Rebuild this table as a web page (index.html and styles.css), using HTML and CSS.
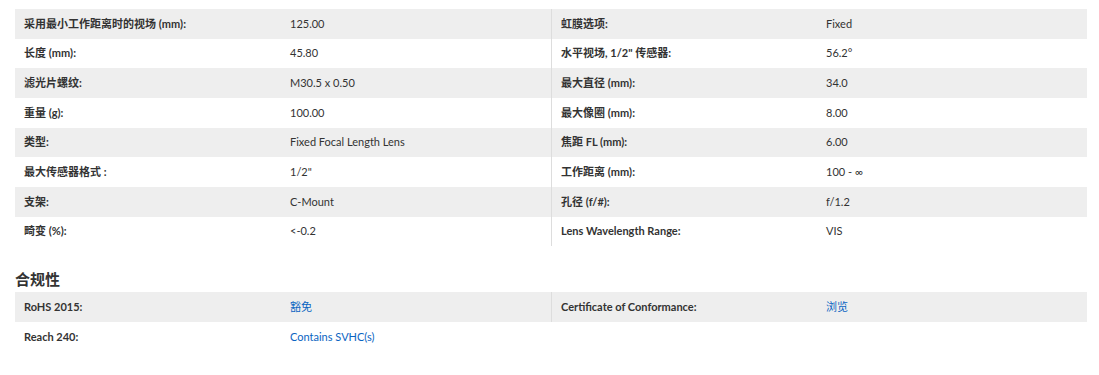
FILE: index.html
```html
<!DOCTYPE html>
<html lang="zh-CN">
<head>
<meta charset="utf-8">
<title>规格</title>
<link rel="stylesheet" href="styles.css">
</head>
<body>
<div class="page">
  <div class="specs">
    <div class="col">
      <div class="row"><div class="label">采用最小工作距离时的视场 (mm):</div><div class="value">125.00</div></div>
      <div class="row"><div class="label">长度 (mm):</div><div class="value">45.80</div></div>
      <div class="row"><div class="label">滤光片螺纹:</div><div class="value">M30.5 x 0.50</div></div>
      <div class="row"><div class="label">重量 (g):</div><div class="value">100.00</div></div>
      <div class="row"><div class="label">类型:</div><div class="value">Fixed Focal Length Lens</div></div>
      <div class="row"><div class="label">最大传感器格式 :</div><div class="value">1/2"</div></div>
      <div class="row"><div class="label">支架:</div><div class="value">C-Mount</div></div>
      <div class="row"><div class="label">畸变 (%):</div><div class="value">&lt;-0.2</div></div>
    </div>
    <div class="col col-right">
      <div class="row"><div class="label">虹膜选项:</div><div class="value">Fixed</div></div>
      <div class="row"><div class="label">水平视场, 1/2" 传感器:</div><div class="value">56.2°</div></div>
      <div class="row"><div class="label">最大直径 (mm):</div><div class="value">34.0</div></div>
      <div class="row"><div class="label">最大像圈 (mm):</div><div class="value">8.00</div></div>
      <div class="row"><div class="label">焦距 FL (mm):</div><div class="value">6.00</div></div>
      <div class="row"><div class="label">工作距离 (mm):</div><div class="value">100 - ∞</div></div>
      <div class="row"><div class="label">孔径 (f/#):</div><div class="value">f/1.2</div></div>
      <div class="row"><div class="label">Lens Wavelength Range:</div><div class="value">VIS</div></div>
    </div>
  </div>

  <h2 class="section-title">合规性</h2>
  <div class="specs">
    <div class="col">
      <div class="row"><div class="label">RoHS 2015:</div><div class="value"><a class="link" href="#">豁免</a></div></div>
      <div class="row"><div class="label">Reach 240:</div><div class="value"><a class="link" href="#">Contains SVHC(s)</a></div></div>
    </div>
    <div class="col col-right">
      <div class="row"><div class="label">Certificate of Conformance:</div><div class="value"><a class="link" href="#">浏览</a></div></div>
    </div>
  </div>
</div>
</body>
</html>
```
FILE: styles.css
```css
html, body {
  margin: 0;
  padding: 0;
  background: #ffffff;
}

body {
  font-family: Lato, "Noto Sans CJK SC", sans-serif;
  font-size: 11px;
  color: #333333;
}

.page {
  padding: 9px 12px 0 15px;
}

.specs {
  display: grid;
  grid-template-columns: 536px 536px;
  align-items: start;
}

.col-right {
  border-left: 1px solid #dddddd;
}

.row {
  display: grid;
  grid-template-columns: 266px 1fr;
  height: 29.66px;
  align-items: center;
}

.col-right .row {
  grid-template-columns: 265px 1fr;
}

.row:nth-child(odd) {
  background: #eeeeee;
}

.label,
.value {
  padding: 0 9px;
  line-height: 14px;
  white-space: nowrap;
}

.label {
  font-weight: 700;
  color: #333333;
}

.value {
  color: #333333;
}

.link {
  color: #0a64c2;
  text-decoration: none;
}

.section-title {
  margin: 0;
  padding: 26px 0 6px;
  font-size: 15px;
  line-height: 14px;
  font-weight: 700;
  color: #333333;
  font-family: "Noto Sans CJK SC", sans-serif;
}
```
